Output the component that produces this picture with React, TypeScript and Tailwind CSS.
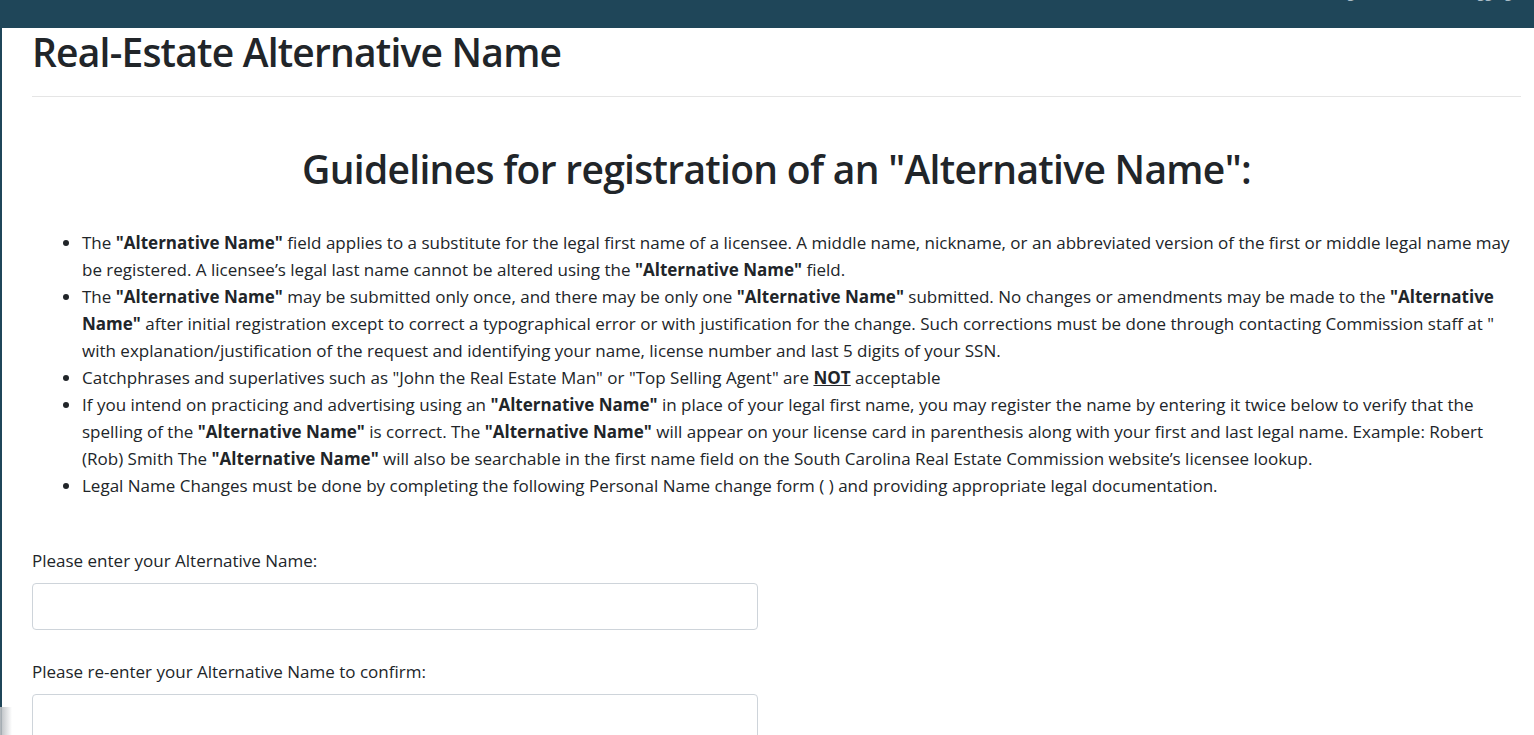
const AN = () => <b className="font-bold">"Alternative Name"</b>;

export default function App() {
  return (
    <div className="min-h-screen bg-white text-[#212529] relative" style={{ fontFamily: '"Open Sans", sans-serif' }}>
      <header className="h-[28px] bg-[#1f4659] overflow-hidden relative">
        <div className="absolute right-[22px] top-[-19px] flex gap-[100px] text-[14px] text-[#a9bcc7]">
          <span>Settings</span>
          <span>Logging</span>
        </div>
      </header>
      <div className="flex">
        <div className="w-[2px] bg-[#1f4659] min-h-[672px]" />
        <main className="flex-1 pl-[30px] pr-[13px]">
          <h1 className="text-[39px] leading-[48px] font-semibold tracking-[-0.8px]">Real-Estate Alternative Name</h1>
          <hr className="mt-[20px] border-t border-[#e5e5e5]" />
          <h2 className="mt-[48px] text-center text-[39px] leading-[48px] font-semibold tracking-[-0.7px]">
            Guidelines for registration of an "Alternative Name":
          </h2>
          <ul className="mt-[36px] list-disc pl-[50px] text-[17px] leading-[27px]">
            <li>
              The <AN /> field applies to a substitute for the legal first name of a licensee. A middle name, nickname, or an abbreviated version of the first or middle legal name may be registered. A licensee’s legal last name cannot be altered using the <AN /> field.
            </li>
            <li>
              The <AN /> may be submitted only once, and there may be only one <AN /> submitted. No changes or amendments may be made to the <AN /> after initial registration except to correct a typographical error or with justification for the change. Such corrections must be done through contacting Commission staff at " with explanation/justification of the request and identifying your name, license number and last 5 digits of your SSN.
            </li>
            <li>
              Catchphrases and superlatives such as "John the Real Estate Man" or "Top Selling Agent" are <b className="font-bold underline">NOT</b> acceptable
            </li>
            <li>
              If you intend on practicing and advertising using an <AN /> in place of your legal first name, you may register the name by entering it twice below to verify that the spelling of the <AN /> is correct. The <AN /> will appear on your license card in parenthesis along with your first and last legal name. Example: Robert (Rob) Smith The <AN /> will also be searchable in the first name field on the South Carolina Real Estate Commission website’s licensee lookup.
            </li>
            <li>
              Legal Name Changes must be done by completing the following Personal Name change form ( ) and providing appropriate legal documentation.
            </li>
          </ul>
          <form className="mt-[48px] text-[17px] leading-[27px]">
            <label className="block">Please enter your Alternative Name:</label>
            <input type="text" className="mt-[9px] block w-[726px] h-[47px] rounded-[4px] border border-[#ced4da] px-3" />
            <label className="block mt-[28px]">Please re-enter your Alternative Name to confirm:</label>
            <input type="text" className="mt-[9px] block w-[726px] h-[47px] rounded-[4px] border border-[#ced4da] px-3" />
          </form>
        </main>
      </div>
      <div className="absolute left-0 bottom-0 w-[12px] h-[34px] bg-gradient-to-r from-[#b8bcc0] to-transparent" />
    </div>
  );
}
